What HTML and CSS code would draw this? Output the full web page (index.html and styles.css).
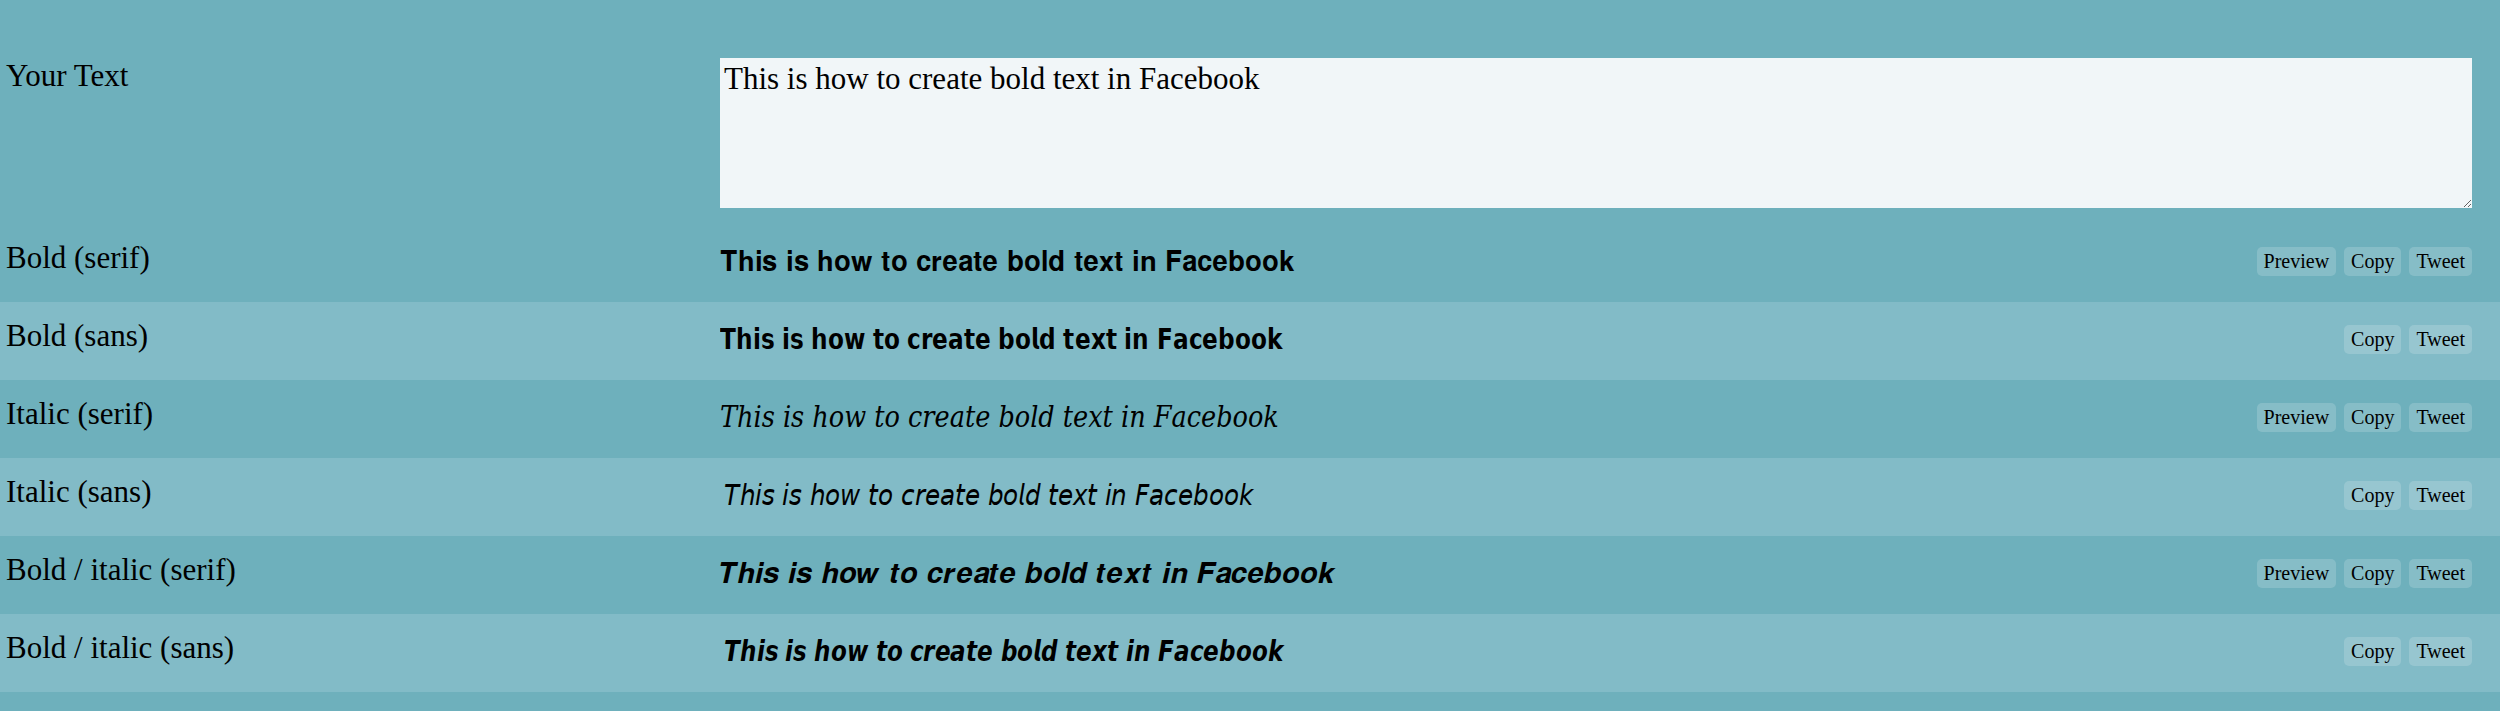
FILE: index.html
```html
<!DOCTYPE html>
<html lang="en">
<head>
  <meta charset="UTF-8">
  <title>Bold Text Generator</title>
  <meta name="viewport" content="width=device-width, initial-scale=1.0">
  <link rel="stylesheet" href="styles.css">
</head>
<body>
  <div class="generator">
    <div class="input-row">
      <label class="label" for="source">Your Text</label>
      <textarea id="source" class="source">This is how to create bold text in Facebook</textarea>
    </div>
    <div class="row">
      <div class="label">Bold (serif)</div>
      <div class="value bold-serif">𝐓𝐡𝐢𝐬 𝐢𝐬 𝐡𝐨𝐰 𝐭𝐨 𝐜𝐫𝐞𝐚𝐭𝐞 𝐛𝐨𝐥𝐝 𝐭𝐞𝐱𝐭 𝐢𝐧 𝐅𝐚𝐜𝐞𝐛𝐨𝐨𝐤</div>
      <div class="actions"><button>Preview</button><button>Copy</button><button>Tweet</button></div>
    </div>
    <div class="row">
      <div class="label">Bold (sans)</div>
      <div class="value bold-sans">𝗧𝗵𝗶𝘀 𝗶𝘀 𝗵𝗼𝘄 𝘁𝗼 𝗰𝗿𝗲𝗮𝘁𝗲 𝗯𝗼𝗹𝗱 𝘁𝗲𝘅𝘁 𝗶𝗻 𝗙𝗮𝗰𝗲𝗯𝗼𝗼𝗸</div>
      <div class="actions"><button>Copy</button><button>Tweet</button></div>
    </div>
    <div class="row">
      <div class="label">Italic (serif)</div>
      <div class="value italic-serif">𝑇ℎ𝑖𝑠 𝑖𝑠 ℎ𝑜𝑤 𝑡𝑜 𝑐𝑟𝑒𝑎𝑡𝑒 𝑏𝑜𝑙𝑑 𝑡𝑒𝑥𝑡 𝑖𝑛 𝐹𝑎𝑐𝑒𝑏𝑜𝑜𝑘</div>
      <div class="actions"><button>Preview</button><button>Copy</button><button>Tweet</button></div>
    </div>
    <div class="row">
      <div class="label">Italic (sans)</div>
      <div class="value italic-sans">𝘛𝘩𝘪𝘴 𝘪𝘴 𝘩𝘰𝘸 𝘵𝘰 𝘤𝘳𝘦𝘢𝘵𝘦 𝘣𝘰𝘭𝘥 𝘵𝘦𝘹𝘵 𝘪𝘯 𝘍𝘢𝘤𝘦𝘣𝘰𝘰𝘬</div>
      <div class="actions"><button>Copy</button><button>Tweet</button></div>
    </div>
    <div class="row">
      <div class="label">Bold / italic (serif)</div>
      <div class="value bold-italic-serif">𝑻𝒉𝒊𝒔 𝒊𝒔 𝒉𝒐𝒘 𝒕𝒐 𝒄𝒓𝒆𝒂𝒕𝒆 𝒃𝒐𝒍𝒅 𝒕𝒆𝒙𝒕 𝒊𝒏 𝑭𝒂𝒄𝒆𝒃𝒐𝒐𝒌</div>
      <div class="actions"><button>Preview</button><button>Copy</button><button>Tweet</button></div>
    </div>
    <div class="row">
      <div class="label">Bold / italic (sans)</div>
      <div class="value bold-italic-sans">𝙏𝙝𝙞𝙨 𝙞𝙨 𝙝𝙤𝙬 𝙩𝙤 𝙘𝙧𝙚𝙖𝙩𝙚 𝙗𝙤𝙡𝙙 𝙩𝙚𝙭𝙩 𝙞𝙣 𝙁𝙖𝙘𝙚𝙗𝙤𝙤𝙠</div>
      <div class="actions"><button>Copy</button><button>Tweet</button></div>
    </div>
  </div>
  <script>
    let source = document.getElementById('source');
    source.focus();
    source.setSelectionRange(source.value.length, source.value.length);
  </script>
</body>
</html>
```

FILE: styles.css
```css
body { margin: 0; background: #6eb0bc; font-family: 'Liberation Serif', 'Times New Roman', serif; font-size: 31px; color: #000; }
.generator { padding-top: 58px; }
.input-row { display: grid; grid-template-columns: 720px 1fr; padding-right: 28px; margin-bottom: 16px; }
.label { padding-left: 6px; }
.source {
  height: 150px; box-sizing: border-box; border: none; outline: none;
  padding: 3px 4px; background: #f1f6f8; color: #000; caret-color: #000;
  font-family: inherit; font-size: 31px; resize: vertical;
}
.row {
  display: grid; grid-template-columns: 720px 1fr auto; align-items: start;
  height: 78px; box-sizing: border-box; padding: 16px 28px 0 0;
}
.row:nth-child(odd) { background: #82bbc7; }

/* the styled letters only exist in the DejaVu faces here, squeeze them to the page's widths */
.value { font-family: 'DejaVu Sans', sans-serif; font-size: 29px; padding-top: 4px; white-space: nowrap; transform-origin: left center; }
.bold-serif { transform: scaleX(0.94); }
.bold-sans { transform: scaleX(0.8); }
.italic-serif { font-family: 'DejaVu Serif Condensed', 'DejaVu Serif', serif; transform: scaleX(0.98); }
.italic-sans { padding-left: 5px; transform: scaleX(0.85); }
.bold-italic-serif { transform: scaleX(1); }
.bold-italic-sans { padding-left: 5px; transform: scaleX(0.795); }

.actions { display: flex; gap: 8px; margin-top: 7px; }
.actions button {
  font-family: inherit; font-size: 20px; color: #000;
  background: rgba(255, 255, 255, 0.17); border: none; border-radius: 5px;
  padding: 3px 7px; cursor: pointer;
}
```
